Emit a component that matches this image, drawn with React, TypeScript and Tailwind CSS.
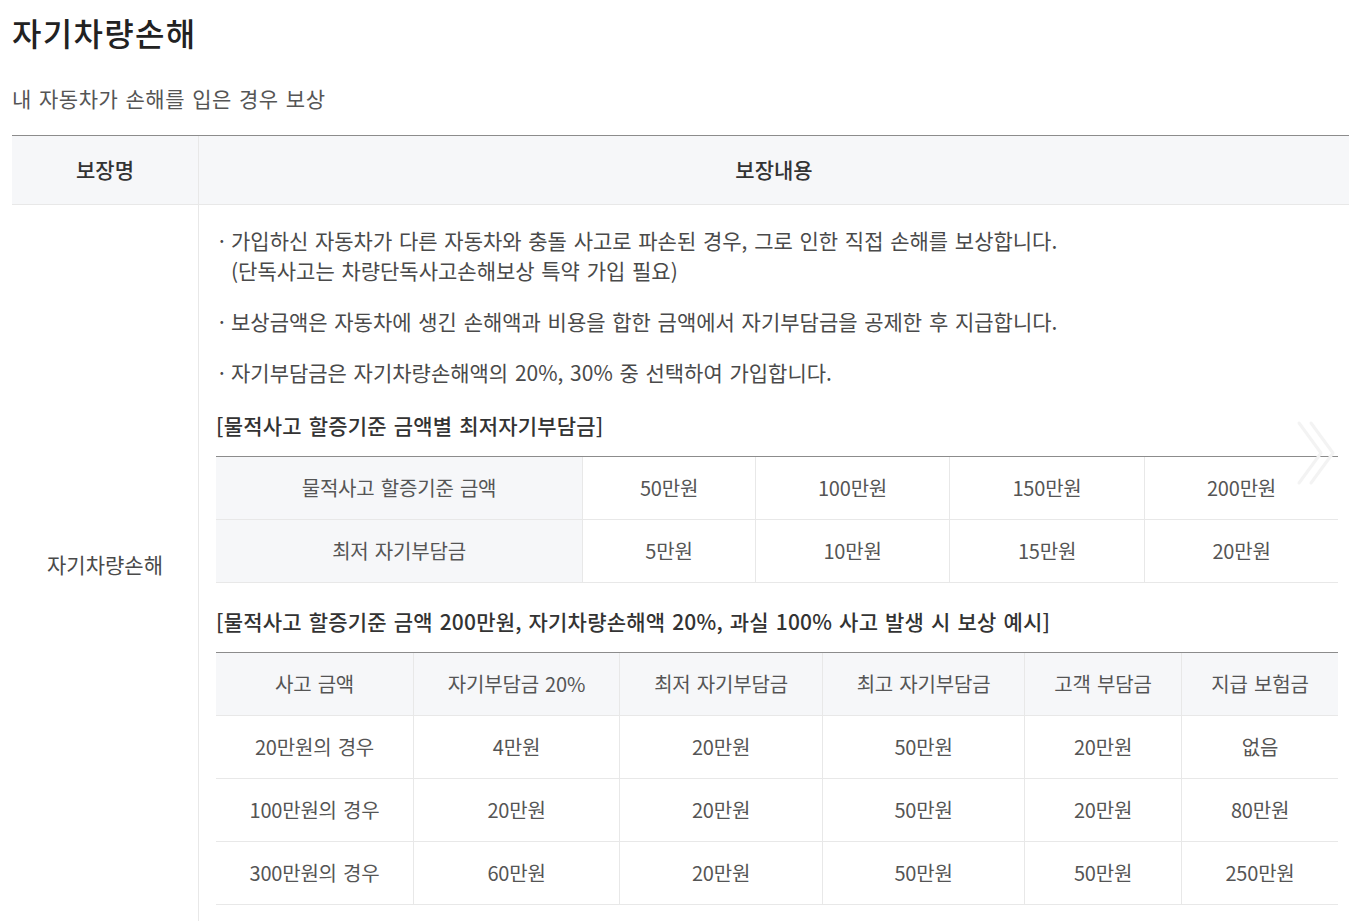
import React from 'react'

const font = { fontFamily: '"Noto Sans CJK KR", "Noto Sans", sans-serif', wordSpacing: '2px' }

const bullets = [
  ['가입하신 자동차가 다른 자동차와 충돌 사고로 파손된 경우, 그로 인한 직접 손해를 보상합니다.', '(단독사고는 차량단독사고손해보상 특약 가입 필요)'],
  ['보상금액은 자동차에 생긴 손해액과 비용을 합한 금액에서 자기부담금을 공제한 후 지급합니다.'],
  ['자기부담금은 자기차량손해액의 20%, 30% 중 선택하여 가입합니다.'],
]

const minTable = [
  ['물적사고 할증기준 금액', '50만원', '100만원', '150만원', '200만원'],
  ['최저 자기부담금', '5만원', '10만원', '15만원', '20만원'],
]

const exHead = ['사고 금액', '자기부담금 20%', '최저 자기부담금', '최고 자기부담금', '고객 부담금', '지급 보험금']
const exRows = [
  ['20만원의 경우', '4만원', '20만원', '50만원', '20만원', '없음'],
  ['100만원의 경우', '20만원', '20만원', '50만원', '20만원', '80만원'],
  ['300만원의 경우', '60만원', '20만원', '50만원', '50만원', '250만원'],
]

export default function App() {
  return (
    <div className="relative min-h-[921px] bg-white pl-3 text-[#4a4a4a]" style={font}>
      <h2 className="pt-[10px] text-[32px] font-medium leading-[44px] tracking-[1.3px] text-[#222]">자기차량손해</h2>
      <p className="mt-[29px] text-[21px] leading-[30px] tracking-[0.5px] text-[#555]">내 자동차가 손해를 입은 경우 보상</p>

      <div className="mt-[22px] border-t border-[#8c8c8c]">
        {/* head */}
        <div className="flex h-[69px] border-b border-[#e8e8e8] bg-[#f6f7f9] text-[21px] font-medium text-[#333]">
          <div className="flex w-[187px] items-center justify-center border-r border-[#e8e8e8]">보장명</div>
          <div className="flex flex-1 items-center justify-center">보장내용</div>
        </div>

        {/* body */}
        <div className="flex">
          <div className="flex w-[187px] shrink-0 items-center justify-center border-r border-[#e8e8e8] text-[21px] text-[#4a4a4a]">
            자기차량손해
          </div>
          <div className="flex-1 pb-[20px] pl-[17px] pr-[11px] pt-[20px]">
            <ul className="flex flex-col gap-[21px] text-[21px] leading-[30px]">
              {bullets.map((b, i) => (
                <li key={i} className="flex">
                  <span className="w-[15px] shrink-0">·</span>
                  <div>
                    {b.map((line, j) => (
                      <div key={j}>{line}</div>
                    ))}
                  </div>
                </li>
              ))}
            </ul>

            <h4 className="mt-[23px] text-[21px] font-medium leading-[30px] tracking-[0.2px] text-[#333]">
              [물적사고 할증기준 금액별 최저자기부담금]
            </h4>
            <div className="mt-[16px] border-t border-[#8c8c8c] text-[20px] tracking-[-0.2px] text-[#555]">
              {minTable.map((row, i) => (
                <div key={i} className="grid h-[63px] grid-cols-[367px_173px_194px_195px_1fr] border-b border-[#e8e8e8]">
                  {row.map((c, j) => (
                    <div
                      key={j}
                      className={`flex items-center justify-center ${j < 4 ? 'border-r border-[#e8e8e8]' : ''} ${j === 0 ? 'bg-[#f6f7f9]' : ''}`}
                    >
                      {c}
                    </div>
                  ))}
                </div>
              ))}
            </div>

            <h4 className="mt-[23px] text-[21px] font-medium leading-[30px] tracking-[0.2px] text-[#333]">
              [물적사고 할증기준 금액 200만원, 자기차량손해액 20%, 과실 100% 사고 발생 시 보상 예시]
            </h4>
            <div className="mt-[16px] border-t border-[#8c8c8c] text-[20px] tracking-[-0.2px] text-[#555]">
              <div className="grid h-[63px] grid-cols-[198px_206px_203px_202px_157px_1fr] border-b border-[#e8e8e8] bg-[#f6f7f9]">
                {exHead.map((c, j) => (
                  <div key={j} className={`flex items-center justify-center ${j < 5 ? 'border-r border-[#e8e8e8]' : ''}`}>
                    {c}
                  </div>
                ))}
              </div>
              {exRows.map((row, i) => (
                <div key={i} className="grid h-[63px] grid-cols-[198px_206px_203px_202px_157px_1fr] border-b border-[#e8e8e8]">
                  {row.map((c, j) => (
                    <div key={j} className={`flex items-center justify-center ${j < 5 ? 'border-r border-[#e8e8e8]' : ''}`}>
                      {c}
                    </div>
                  ))}
                </div>
              ))}
            </div>
          </div>
        </div>
      </div>

      {/* faded carousel arrow */}
      <svg className="pointer-events-none absolute left-[1296px] top-[420px]" width="42" height="66" viewBox="0 0 42 66" fill="none">
        <path d="M3 3L25 33L3 63" stroke="#f3f3f3" strokeWidth="3" strokeLinecap="round" strokeLinejoin="round" />
        <path d="M15 3L37 33L15 63" stroke="#f3f3f3" strokeWidth="3" strokeLinecap="round" strokeLinejoin="round" />
      </svg>
    </div>
  )
}
